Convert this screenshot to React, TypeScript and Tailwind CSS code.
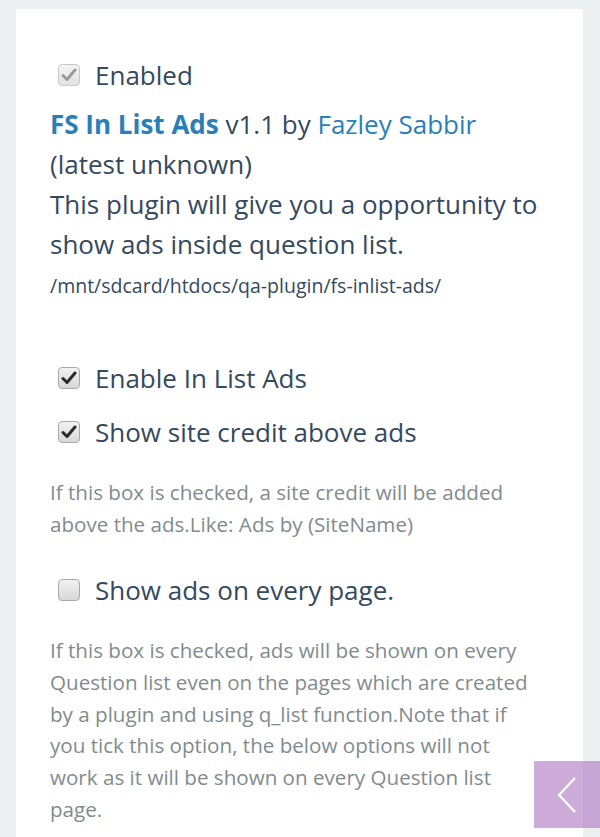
import React from "react";

function Box({ checked, disabled }: { checked?: boolean; disabled?: boolean }) {
  return (
    <span
      className={
        "flex h-[22px] w-[22px] shrink-0 items-center justify-center rounded-[4px] border " +
        (disabled
          ? "border-[#c8c8c8] bg-gradient-to-b from-[#f4f4f4] to-[#e2e2e2]"
          : "border-[#a9a9a9] bg-gradient-to-b from-[#f2f2f2] to-[#d8d8d8]")
      }
    >
      {checked && (
        <svg width="16" height="14" viewBox="0 0 16 14">
          <path
            d="M2 7.5 L6 11.5 L14 2"
            fill="none"
            stroke={disabled ? "#9a9a9a" : "#2a2a2a"}
            strokeWidth="3"
            strokeLinecap="round"
            strokeLinejoin="round"
          />
        </svg>
      )}
    </span>
  );
}

function Row({ checked, disabled, label }: { checked?: boolean; disabled?: boolean; label: string }) {
  return (
    <div className="flex h-[40px] items-center pl-2">
      <Box checked={checked} disabled={disabled} />
      <span className="ml-[15px] text-[26px] leading-[40px] text-[#34495e]">{label}</span>
    </div>
  );
}

export default function App() {
  return (
    <div
      className="relative h-[837px] w-[600px] overflow-hidden bg-[#ecf0f1]"
      style={{ fontFamily: '"Open Sans", "Noto Sans", sans-serif' }}
    >
      <div className="ml-[16px] mt-[9px] h-[900px] w-[567px] bg-white pl-[34px] pr-[43px] pt-[46px]">
        <Row checked disabled label="Enabled" />
        <div className="mt-[9px] text-[26px] leading-[40px] text-[#34495e]">
          <div>
            <span className="font-bold text-[#2980b9]">FS In List Ads</span> v1.1 by{" "}
            <span className="text-[#2980b9]">Fazley Sabbir</span>
          </div>
          <div>(latest unknown)</div>
          <div>This plugin will give you a opportunity to show ads inside question list.</div>
        </div>
        <div className="mt-[7px] text-[19.5px] leading-[30px] text-[#34495e]">
          /mnt/sdcard/htdocs/qa-plugin/fs-inlist-ads/
        </div>
        <div className="mt-[57px]">
          <Row checked label="Enable In List Ads" />
        </div>
        <div className="mt-[14px]">
          <Row checked label="Show site credit above ads" />
        </div>
        <p className="mt-[25px] text-[20.6px] leading-[31.5px] text-[#7f8c8d]">
          If this box is checked, a site credit will be added above the ads.Like: Ads by (SiteName)
        </p>
        <div className="mt-[30px]">
          <Row label="Show ads on every page." />
        </div>
        <p className="mt-[25px] text-[20.6px] leading-[31.8px] text-[#7f8c8d]">
          If this box is checked, ads will be shown on every Question list even on the pages which are created
          by a plugin and using q_list function.Note that if you tick this option, the below options will not
          work as it will be shown on every Question list page.
        </p>
      </div>
      <div className="absolute left-[534px] top-[761px] flex h-[67px] w-[66px] items-center justify-center bg-[rgba(155,89,182,0.5)]">
        <svg width="24" height="40" viewBox="0 0 24 40">
          <path d="M20 3 L4 20 L20 37" fill="none" stroke="white" strokeWidth="2.2" />
        </svg>
      </div>
    </div>
  );
}
